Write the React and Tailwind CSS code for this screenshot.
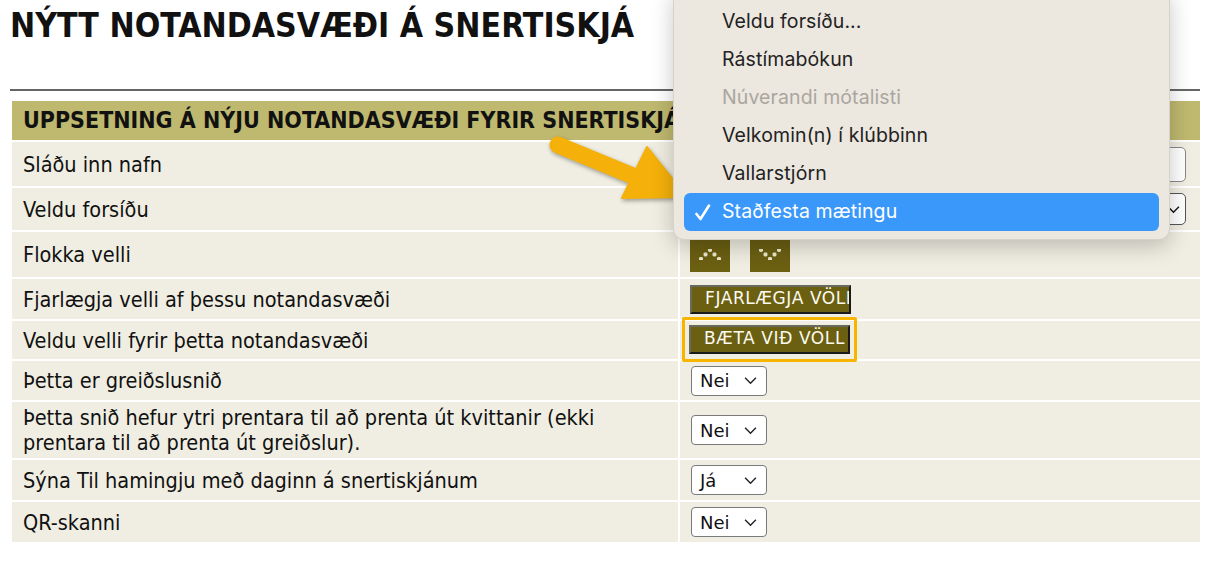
import React from "react";

const rows = [
  { label: "Sláðu inn nafn", h: "h-[44px]", kind: "input" },
  { label: "Veldu forsíðu", h: "h-[42px]", kind: "select" },
  { label: "Flokka velli", h: "h-[45px]", kind: "sort" },
  { label: "Fjarlægja velli af þessu notandasvæði", h: "h-[40px]", kind: "remove" },
  { label: "Veldu velli fyrir þetta notandasvæði", h: "h-[38px]", kind: "add" },
  { label: "Þetta er greiðslusnið", h: "h-[39px]", kind: "yn", value: "Nei" },
  {
    label: (
      <>
        Þetta snið hefur ytri prentara til að prenta út kvittanir (ekki
        <br />
        prentara til að prenta út greiðslur).
      </>
    ),
    h: "h-[56px]",
    kind: "yn",
    value: "Nei",
  },
  { label: "Sýna Til hamingju með daginn á snertiskjánum", h: "h-[40px]", kind: "yn", value: "Já" },
  { label: "QR-skanni", h: "h-[40px]", kind: "yn", value: "Nei" },
];

const menuItems = [
  { name: "Veldu forsíðu..." },
  { name: "Rástímabókun" },
  { name: "Núverandi mótalisti", disabled: true },
  { name: "Velkomin(n) í klúbbinn" },
  { name: "Vallarstjórn" },
  { name: "Staðfesta mætingu", selected: true },
];

const wide = { fontFamily: "'DejaVu Sans', Verdana, sans-serif" };

function Chevron({ className }) {
  return (
    <svg className={className} viewBox="0 0 12 8" fill="none" stroke="currentColor" strokeWidth="1.3">
      <path d="M1 1.5l5 5 5-5" />
    </svg>
  );
}

function YesNo({ value }) {
  return (
    <div
      className="flex items-center justify-between w-[76px] h-[30px] pl-[8px] pr-[9px] bg-white border border-[#7a7a7a] rounded-[4px] text-[18px] text-[#111]"
      style={wide}
    >
      <span>{value}</span>
      <Chevron className="w-[13px] h-[9px] text-[#222]" />
    </div>
  );
}

function DotArrow({ up }) {
  const pts = up
    ? [[2, 10], [6.5, 5.5], [11, 1], [15.5, 5.5], [20, 10]]
    : [[2, 1], [6.5, 5.5], [11, 10], [15.5, 5.5], [20, 1]];
  return (
    <svg width="22" height="11" viewBox="0 0 22 11">
      {pts.map(([x, y], i) => (
        <rect key={i} x={x - 2} y={y - 2} width="4" height="4" rx="1.4" fill="#ebe7cc" />
      ))}
    </svg>
  );
}

function OliveButton({ children }) {
  return (
    <div
      className="w-[161px] h-[29px] overflow-hidden whitespace-nowrap bg-[#6b5f12] border-2 border-t-[#6a6a5c] border-l-[#6a6a5c] border-r-[#1a1a1a] border-b-[#1a1a1a] pl-[13px] flex items-center text-[17px] tracking-[0.6px] text-[#fbfaf0]"
      style={wide}
    >
      {children}
    </div>
  );
}

function RightCell({ row }) {
  switch (row.kind) {
    case "input":
      return <div className="ml-[10px] mr-[14px] h-[35px] bg-white border border-[#888] rounded-[5px]" />;
    case "select":
      return (
        <div className="ml-[10px] mr-[14px] h-[32px] bg-white border border-[#555] rounded-[5px] flex items-center justify-end pr-[5px]">
          <Chevron className="w-[13px] h-[9px] text-[#111]" />
        </div>
      );
    case "sort":
      return (
        <div className="flex gap-[20px] pl-[10px]">
          <div className="w-[40px] h-[35px] bg-[#6b5f12] flex items-center justify-center">
            <DotArrow up />
          </div>
          <div className="w-[40px] h-[35px] bg-[#6b5f12] flex items-center justify-center">
            <DotArrow />
          </div>
        </div>
      );
    case "remove":
      return (
        <div className="pl-[10px]">
          <OliveButton>FJARLÆGJA VÖLL</OliveButton>
        </div>
      );
    case "add":
      return (
        <div className="pl-[2px]">
          <div className="relative -top-[1px] inline-flex px-[4px] py-[5px] border-[3px] border-[#f7b500] rounded-[2px]">
            <OliveButton>BÆTA VIÐ VÖLL</OliveButton>
          </div>
        </div>
      );
    default:
      return (
        <div className="pl-[11px]">
          <YesNo value={row.value} />
        </div>
      );
  }
}

function DropdownMenu() {
  return (
    <div
      className="absolute left-[673px] top-[-12px] w-[497px] h-[252px] bg-[#ece7df] rounded-[11px] shadow-[0_6px_22px_rgba(0,0,0,0.22)] border border-[#d6d1c9] pt-[14px] px-[10px]"
      style={{ fontFamily: "Inter, 'Liberation Sans', sans-serif" }}
    >
      <ul className="flex flex-col">
        {menuItems.map((item) => (
          <li
            key={item.name}
            className={`h-[38px] flex items-center pl-[38px] text-[19.5px] tracking-[0.1px] rounded-[6px] relative ${
              item.selected
                ? "bg-[#3a98fb] text-white"
                : item.disabled
                ? "text-[#aaa69f]"
                : "text-[#222]"
            }`}
          >
            {item.selected && (
              <svg className="absolute left-[10px] top-[11px]" width="17" height="17" viewBox="0 0 17 17" fill="none">
                <path d="M2.5 10l4 5L15 1.5" stroke="white" strokeWidth="2.6" strokeLinecap="round" strokeLinejoin="round" />
              </svg>
            )}
            {item.name}
          </li>
        ))}
      </ul>
    </div>
  );
}

function Arrow() {
  return (
    <svg
      className="absolute left-[540px] top-[125px]"
      width="160"
      height="90"
      viewBox="0 0 160 90"
      style={{ filter: "drop-shadow(1px 2px 2px rgba(0,0,0,0.35))" }}
    >
      <path d="M18 20 L98 53" stroke="#f5b10a" strokeWidth="17" strokeLinecap="round" />
      <path d="M107 22 L147 72 L82 73 Z" fill="#f5b10a" strokeLinejoin="round" stroke="#f5b10a" strokeWidth="2" />
    </svg>
  );
}

export default function App() {
  return (
    <div
      className="relative w-[1212px] h-[568px] bg-white overflow-hidden text-[#111]"
      style={{ fontFamily: "'DejaVu Sans Condensed', 'DejaVu Sans', sans-serif" }}
    >
      <h1 className="pl-[10px] pt-[6px] text-[33.5px] leading-[40px] font-bold">
        NÝTT NOTANDASVÆÐI Á SNERTISKJÁ
      </h1>

      <div className="ml-[10px] w-[1190px] h-[2px] bg-[#666] mt-[43px]" />

      <div className="ml-[12px] w-[1188px] mt-[10px] flex flex-col gap-[2px]">
        <div className="h-[39px] bg-[#bfb86f] flex items-center pl-[11px] text-[23px] font-bold whitespace-nowrap overflow-hidden">
          UPPSETNING Á NÝJU NOTANDASVÆÐI FYRIR SNERTISKJÁ
        </div>
        {rows.map((row, i) => (
          <div key={i} className={`flex gap-[2px] ${row.h}`}>
            <div className="w-[666px] bg-[#f0eee2] flex items-center pl-[11px] text-[21.5px] leading-[25px]">
              {row.label}
            </div>
            <div className="flex-1 bg-[#f0eee2] flex flex-col justify-center">
              <RightCell row={row} />
            </div>
          </div>
        ))}
      </div>

      <Arrow />
      <DropdownMenu />
    </div>
  );
}
